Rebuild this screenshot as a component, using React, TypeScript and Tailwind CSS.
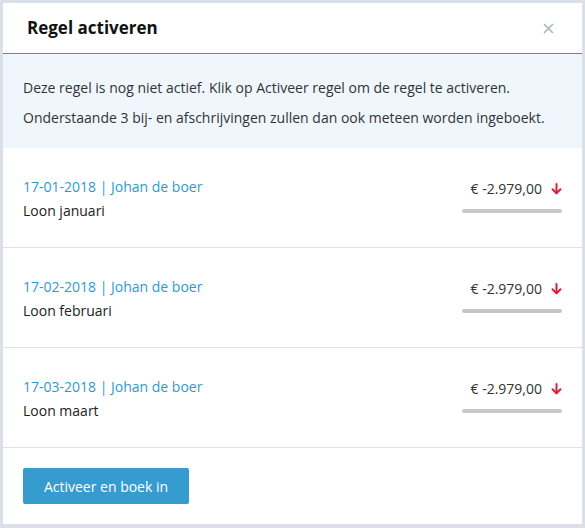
import React from "react";

type Booking = { date: string; name: string; description: string; amount: string };

const bookings: Booking[] = [
  { date: "17-01-2018", name: "Johan de boer", description: "Loon januari", amount: "€ -2.979,00" },
  { date: "17-02-2018", name: "Johan de boer", description: "Loon februari", amount: "€ -2.979,00" },
  { date: "17-03-2018", name: "Johan de boer", description: "Loon maart", amount: "€ -2.979,00" },
];

function ArrowDown() {
  return (
    <svg width="11" height="12" viewBox="0 0 11 12" className="shrink-0">
      <path d="M5.5 1v9" stroke="#d3213a" strokeWidth="2" strokeLinecap="round" />
      <path d="M1.5 6.2l4 4 4-4" stroke="#d3213a" strokeWidth="2" fill="none" strokeLinecap="round" strokeLinejoin="round" />
    </svg>
  );
}

function BookingRow({ booking }: { booking: Booking }) {
  return (
    <div className="flex justify-between border-b border-[#dde1e8] px-5 pt-[29px] pb-[26px]">
      <div className="flex flex-col gap-1 text-[14px] leading-5">
        <span className="text-[#2f9ad0]">
          {booking.date} | {booking.name}
        </span>
        <span className="text-[#222]">{booking.description}</span>
      </div>
      <div className="flex w-[100px] flex-col items-end">
        <div className="mt-[2px] flex items-center gap-[9px] text-[14px] leading-5 text-[#333]">
          <span>{booking.amount}</span>
          <ArrowDown />
        </div>
        <div className="mt-[10px] h-[4px] w-[100px] rounded-full bg-[#c7c7c7]" />
      </div>
    </div>
  );
}

export default function App() {
  return (
    <div
      className="flex h-[528px] w-[585px] bg-[#dbe0e8] pt-[3px] pr-[3px] pb-[4px] pl-[3px]"
      style={{ fontFamily: '"Open Sans", "Noto Sans", sans-serif' }}
    >
      <div className="flex flex-1 flex-col bg-white">
        <div className="flex h-[51px] shrink-0 items-center justify-between border-b border-[#3d95c7] pr-[28px] pl-6">
          <h1 className="text-[17px] font-bold text-[#111]">Regel activeren</h1>
          <svg width="11" height="11" viewBox="0 0 11 11">
            <path d="M1 1l9 9M10 1l-9 9" stroke="#a9b7c2" strokeWidth="1.6" />
          </svg>
        </div>
        <div className="flex flex-col gap-[10px] bg-[#eff7fd] px-5 pt-6 pb-5 text-[14px] leading-5 text-[#333]">
          <p>Deze regel is nog niet actief. Klik op Activeer regel om de regel te activeren.</p>
          <p>Onderstaande 3 bij- en afschrijvingen zullen dan ook meteen worden ingeboekt.</p>
        </div>
        {bookings.map((b) => (
          <BookingRow key={b.date} booking={b} />
        ))}
        <div className="px-5 pt-5">
          <button className="h-9 w-[166px] rounded-[2px] bg-[#369bce] text-[14px] text-white">
            Activeer en boek in
          </button>
        </div>
      </div>
    </div>
  );
}
